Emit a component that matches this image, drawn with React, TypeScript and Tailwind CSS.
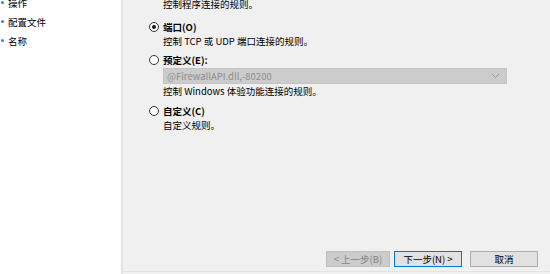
const navItems = ["操作", "配置文件", "名称"];

const Radio = ({ checked }: { checked?: boolean }) => (
  <span className="w-[10px] h-[10px] rounded-full border border-[#333333] bg-white flex items-center justify-center shrink-0">
    {checked && <span className="w-[4px] h-[4px] rounded-full bg-[#1a1a1a]" />}
  </span>
);

const Option = ({
  label,
  desc,
  checked,
  children,
}: {
  label: string;
  desc: string;
  checked?: boolean;
  children?: React.ReactNode;
}) => (
  <div className="flex flex-col">
    <div className="flex items-center gap-[4px] h-[14px]">
      <Radio checked={checked} />
      <span className="font-bold text-black">{label}</span>
    </div>
    <div className="pl-[14px] flex flex-col">
      {children}
      <span className="h-[14px] text-black">{desc}</span>
    </div>
  </div>
);

const App = () => {
  return (
    <div
      className="w-[550px] h-[274px] flex overflow-hidden bg-[#f0f0f0] text-[9.5px] leading-[14px]"
      style={{ fontFamily: '"Noto Sans CJK SC", "Noto Sans", sans-serif' }}
    >
      {/* left nav */}
      <div className="w-[120px] bg-white flex flex-col -mt-[7px] shrink-0">
        {navItems.map((item) => (
          <div key={item} className="h-[19px] flex items-center gap-[4px] pl-[1px]">
            <span className="w-[3px] h-[3px] rounded-full bg-[#3c7fd8]" />
            <span className="text-black">{item}</span>
          </div>
        ))}
      </div>
      <div className="w-px bg-[#fafafa] shrink-0" />
      <div className="w-[2px] bg-[#e3e3e3] shrink-0" />

      {/* right content */}
      <div className="flex-1 flex flex-col">
        <div className="flex flex-col pl-[26px] -mt-[3px]">
          <span className="pl-[14px] h-[14px] text-black">控制程序连接的规则。</span>

          <div className="mt-[9px]">
            <Option label="端口(O)" desc="控制 TCP 或 UDP 端口连接的规则。" checked />
          </div>

          <div className="mt-[5px]">
            <Option label="预定义(E):" desc="控制 Windows 体验功能连接的规则。">
              <div className="mt-[1px] w-[344px] h-[16px] bg-[#cccccc] border border-[#c4c4c4] flex items-center justify-between pl-[3px] pr-[6px]">
                <span className="text-[#8d8d8d]">@FirewallAPI.dll,-80200</span>
                <svg width="9" height="6" viewBox="0 0 9 6" fill="none">
                  <path d="M1 1l3.5 3.5L8 1" stroke="#9a9a9a" strokeWidth="1" />
                </svg>
              </div>
            </Option>
          </div>

          <div className="mt-[6px]">
            <Option label="自定义(C)" desc="自定义规则。" />
          </div>
        </div>

        <div className="mt-auto flex justify-end gap-[4px] pr-[12px] pb-[4px]">
          <button className="w-[64px] h-[16px] bg-[#cccccc] border border-[#bfbfbf] text-[#838383] flex items-center justify-center">
            &lt; 上一步(B)
          </button>
          <button className="w-[68px] h-[16px] bg-[#e1e1e1] border border-[#0078d7] text-black flex items-center justify-center">
            下一步(N) &gt;
          </button>
          <button className="ml-[4px] w-[68px] h-[16px] bg-[#e1e1e1] border border-[#adadad] text-black flex items-center justify-center">
            取消
          </button>
        </div>
        <div className="h-px bg-[#e3e3e3]" />
        <div className="h-[2px]" />
      </div>
    </div>
  );
};

export default App;
